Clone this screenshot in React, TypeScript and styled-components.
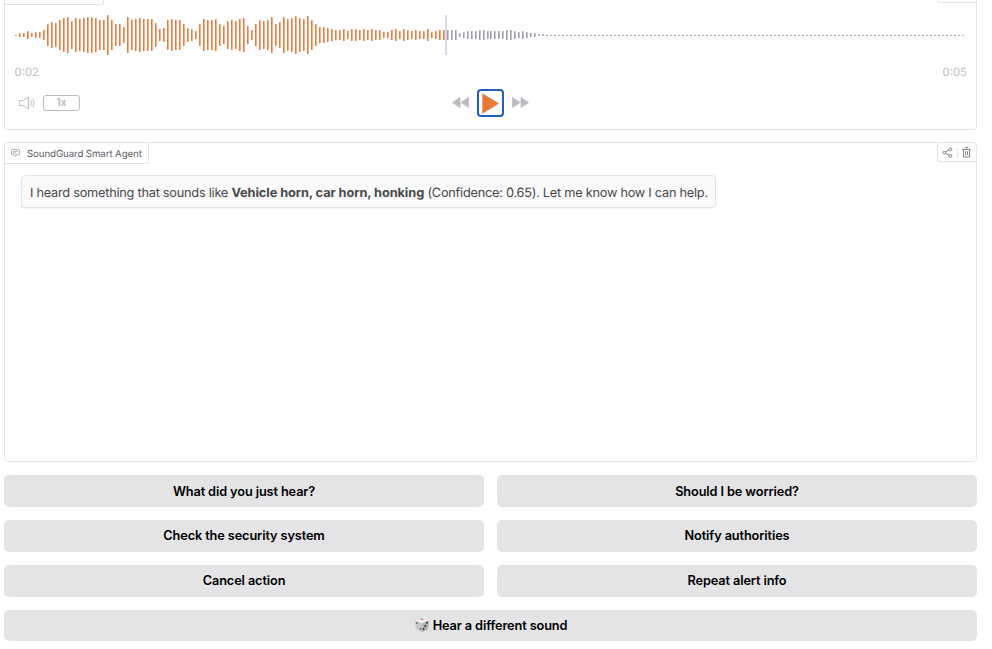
import React from "react";
import styled, { createGlobalStyle } from "styled-components";

const GlobalStyle = createGlobalStyle`
  * { box-sizing: border-box; }
  body { margin: 0; background: #fff; font-family: Inter, "Liberation Sans", sans-serif; overflow: hidden; }
  button { font-family: inherit; border: 0; padding: 0; margin: 0; background: none; }
`;

const Page = styled.main`
  width: 992px;
  height: 649px;
  padding: 0 15px 0 4px;
  overflow: hidden;
  text-rendering: geometricPrecision;
`;

const Panel = styled.section`
  border: 1px solid #e4e4e7;
  border-radius: 4px;
  background: #fff;
`;

const AudioPanel = styled(Panel)`
  height: 130px;
  border-top: 0;
  border-radius: 0 0 4px 4px;
`;

const AudioHeader = styled.div`
  display: flex;
  justify-content: space-between;
  height: 5px;
`;

const LabelStub = styled.div`
  width: 99px;
  height: 5px;
  border: solid #e4e4e7;
  border-width: 0 1px 1px 0;
  border-radius: 0 0 3px 0;
`;

const ToolStub = styled.div`
  width: 39px;
  height: 3px;
  border: solid #e4e4e7;
  border-width: 0 0 1px 1px;
  border-radius: 0 0 0 3px;
`;

const Wave = styled.svg`
  display: block;
  margin: 10px 0 0 10px;
`;

const Times = styled.div`
  display: flex;
  justify-content: space-between;
  height: 14px;
  margin: 10px 9px 0 9.5px;
  font-size: 11.3px;
  line-height: 14px;
  color: #bbbbc2;
`;

const Controls = styled.div`
  display: grid;
  grid-template-columns: 1fr auto 1fr;
  align-items: center;
  height: 28px;
  margin: 10px 9px 0 14px;
`;

const VolumeGroup = styled.div`
  display: flex;
  align-items: center;
  gap: 7px;
`;

const Speed = styled.button`
  width: 37px;
  height: 16px;
  border: 1px solid #bbbbc2;
  border-radius: 3px;
  font-size: 9.75px;
  font-weight: 700;
  line-height: 14px;
  color: #bbbbc2;
`;

const Transport = styled.div`
  display: flex;
  align-items: center;
  gap: 8px;
  margin-right: 5px;
`;

const PlayButton = styled.button`
  display: flex;
  align-items: center;
  justify-content: center;
  width: 27px;
  height: 28px;
  border: 2px solid #205fbd;
  border-radius: 4px;
`;

const SkipIcon = styled.svg`
  display: block;
  margin-bottom: 1px;
`;

const ChatPanel = styled(Panel)`
  height: 320px;
  margin-top: 12px;
`;

const ChatHeader = styled.header`
  display: flex;
  justify-content: space-between;
  align-items: flex-start;
`;

const ChatLabel = styled.div`
  display: flex;
  align-items: center;
  gap: 7px;
  width: 144px;
  height: 21px;
  padding: 0 0 0 6px;
  border: solid #e4e4e7;
  border-width: 0 1px 1px 0;
  border-radius: 0 0 3px 0;
  font-size: 9.7px;
  letter-spacing: -0.1px;
  white-space: nowrap;
  color: #606064;
`;

const LabelText = styled.span`
  padding-top: 2px;
`;

const Tools = styled.div`
  display: flex;
  align-items: center;
  gap: 4px;
  width: 39px;
  height: 19px;
  padding-left: 4px;
  border: solid #e4e4e7;
  border-width: 0 0 1px 1px;
  border-radius: 0 0 0 3px;
`;

const Divider = styled.span`
  width: 1px;
  height: 9px;
  background: #e4e4e7;
`;

const Message = styled.p`
  width: 695px;
  height: 33px;
  margin: 11px 0 0 16px;
  padding: 1px 0 0 8px;
  border: 1px solid #e4e4e7;
  border-radius: 4px 4px 4px 0;
  background: #fafafa;
  box-shadow: 0 1px 2px rgba(0, 0, 0, 0.04);
  font-size: 12.75px;
  line-height: 33px;
  letter-spacing: -0.24px;
  word-spacing: -0.05px;
  white-space: nowrap;
  color: #48484a;

  strong { font-weight: 700; letter-spacing: -0.06px; }
`;

const Actions = styled.div`
  display: grid;
  grid-template-columns: 1fr 1fr;
  gap: 13px;
  margin-top: 13px;
`;

const ActionButton = styled.button<{ $wide?: boolean }>`
  display: flex;
  align-items: center;
  justify-content: center;
  gap: 3px;
  height: ${(p) => (p.$wide ? 31 : 32)}px;
  grid-column: ${(p) => (p.$wide ? "1 / -1" : "auto")};
  border-radius: 5px;
  background: #e4e4e7;
  font-size: 12.75px;
  font-weight: 600;
  letter-spacing: -0.12px;
  color: #000;

  &:nth-child(n + 3) { padding-bottom: 1px; }
`;

const HEIGHTS = [
  1, 4, 4, 8, 4, 6, 6, 10, 22, 26, 24, 30, 34, 36, 28, 34, 32, 34, 36, 36, 34, 30, 30, 40, 30, 22, 22, 16, 36, 30,
  32, 34, 32, 32, 32, 24, 12, 14, 30, 32, 30, 30, 22, 14, 12, 8, 22, 32, 30, 30, 32, 22, 18, 28, 30, 28, 32, 34,
  18, 10, 22, 30, 28, 30, 36, 22, 26, 36, 32, 34, 38, 34, 32, 38, 30, 22, 16, 16, 14, 12, 10, 10, 12, 8, 12, 12,
  10, 12, 10, 12, 10, 10, 6, 6, 10, 12, 8, 12, 10, 8, 10, 8, 8, 12, 6, 8, 10, 10, 10, 10, 10, 4, 6, 8, 8, 8, 10,
  10, 8, 8, 8, 8, 8, 10, 10, 8, 6, 8, 6, 4, 4, 2, 2,
];
const BAR_COUNT = 238;
const PLAYED = 108;

function Waveform() {
  return (
    <Wave width="951" height="40" viewBox="0 0 951 40">
      {Array.from({ length: BAR_COUNT }, (_, i) => {
        const h = HEIGHTS[i] ?? 1;
        const x = i * 4 - (i >= 119 ? 1 : 0);
        return (
          <rect key={i} x={x} y={h === 1 ? 20 : 20 - h / 2} width="1.6" height={h} rx={h > 3 ? 0.6 : 0}
            fill={i < PLAYED ? "#e57b3c" : "#9a9eab"} />
        );
      })}
      <rect x="430" y="0" width="2" height="40" fill="#ddd6e9" />
    </Wave>
  );
}

const Volume = () => (
  <svg width="17" height="14" viewBox="0 0 17 14" fill="none" stroke="#bbbbc2" strokeWidth="1" strokeLinejoin="round" strokeLinecap="round">
    <path d="M1 4.5H4.2L9.5 1V13L4.2 9.5H1Z" />
    <path d="M11.8 4.8Q13 7 11.8 9.2M14 3Q16.6 7 14 11" />
  </svg>
);

const Skip = ({ back = false }: { back?: boolean }) => (
  <SkipIcon width="17" height="11" viewBox="0 0 17 11" fill="#bbbbc2" stroke="#bbbbc2" strokeWidth="0.8" strokeLinejoin="round">
    {back ? <path d="M8 0.4V10.6L0.4 5.5ZM16.6 0.4V10.6L9 5.5Z" /> : <path d="M0.4 0.4V10.6L8 5.5ZM9 0.4V10.6L16.6 5.5Z" />}
  </SkipIcon>
);

const ChatIcon = () => (
  <svg width="9" height="8" viewBox="0 0 9 8" fill="none" stroke="#85858e" strokeWidth="0.65" strokeLinejoin="round">
    <path d="M1.1.6H7.9Q8.5.6 8.5 1.2V5.1Q8.5 5.7 7.9 5.7H5.7L4.5 7.5L3.3 5.7H1.1Q.5 5.7.5 5.1V1.2Q.5.6 1.1.6ZM2.2 2.4H6.8M2.2 4H5.2" />
  </svg>
);

const ShareIcon = () => (
  <svg width="11" height="11" viewBox="0 0 11 11" fill="none" stroke="#707078" strokeWidth="0.9">
    <circle cx="2.3" cy="5.7" r="1.4" />
    <circle cx="8.4" cy="2.3" r="1.4" />
    <circle cx="8.4" cy="8.9" r="1.4" />
    <path d="M3.6 5L7.1 3M3.6 6.4L7.1 8.2" />
  </svg>
);

const TrashIcon = () => (
  <svg width="9" height="11" viewBox="0 0 9 11" fill="none" stroke="#707078" strokeWidth="0.9">
    <path d="M3 .6H6M.3 2.4H8.7M1.4 2.5V10H7.6V2.5M3.5 4.3V8.2M5.5 4.3V8.2" />
  </svg>
);

const DiceIcon = () => (
  <svg width="16" height="16" viewBox="0 0 16 16">
    <path d="M0.6 3.4L7.6 1L15.4 3.2L13.8 12L8 15.3L2 12Z" fill="#c7c7c8" />
    <path d="M0.6 3.4L7.6 1L15.4 3.2L8.4 6.4Z" fill="#f0efef" />
    <path d="M8.4 6.4L15.4 3.2L13.8 12L8 15.3Z" fill="#b4b4b6" />
    <ellipse cx="7.8" cy="2.2" rx="1.6" ry="0.7" fill="#e86a5e" />
    <g fill="#333">
      <circle cx="3" cy="6" r="0.8" />
      <circle cx="6.5" cy="11.7" r="0.8" />
      <circle cx="12.9" cy="5.8" r="1" />
      <circle cx="11.3" cy="8.9" r="1" />
      <circle cx="9.5" cy="12" r="1" />
    </g>
  </svg>
);

const ACTIONS = [
  "What did you just hear?",
  "Should I be worried?",
  "Check the security system",
  "Notify authorities",
  "Cancel action",
  "Repeat alert info",
];

export default function App() {
  return (
    <>
      <GlobalStyle />
      <Page>
        <AudioPanel>
          <AudioHeader>
            <LabelStub />
            <ToolStub />
          </AudioHeader>
          <Waveform />
          <Times>
            <span>0:02</span>
            <span>0:05</span>
          </Times>
          <Controls>
            <VolumeGroup>
              <Volume />
              <Speed>1x</Speed>
            </VolumeGroup>
            <Transport>
              <Skip back />
              <PlayButton aria-label="Play">
                <svg width="17" height="21" viewBox="0 0 17 21"><path d="M0.3 0.2L17 10.5L0.3 20.8Z" fill="#e77a37" /></svg>
              </PlayButton>
              <Skip />
            </Transport>
          </Controls>
        </AudioPanel>
        <ChatPanel>
          <ChatHeader>
            <ChatLabel>
              <ChatIcon />
              <LabelText>SoundGuard Smart Agent</LabelText>
            </ChatLabel>
            <Tools>
              <ShareIcon />
              <Divider />
              <TrashIcon />
            </Tools>
          </ChatHeader>
          <Message>
            I heard something that sounds like <strong>Vehicle horn, car horn, honking</strong> (Confidence: 0.65). Let me
            know how I can help.
          </Message>
        </ChatPanel>
        <Actions>
          {ACTIONS.map((label) => (
            <ActionButton key={label}>{label}</ActionButton>
          ))}
          <ActionButton $wide>
            <DiceIcon />
            Hear a different sound
          </ActionButton>
        </Actions>
      </Page>
    </>
  );
}
